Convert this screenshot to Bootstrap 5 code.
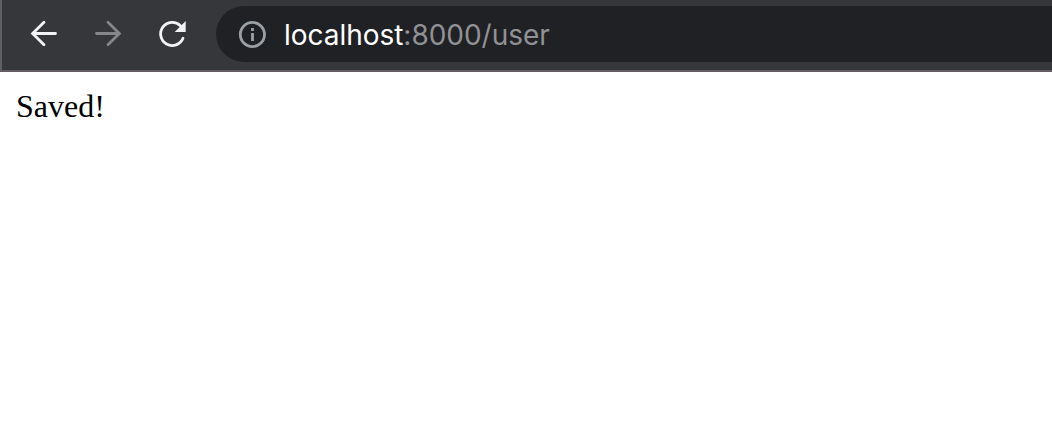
<!DOCTYPE html>
<html lang="en">
<head>
<meta charset="utf-8">
<title>localhost:8000/user</title>
<link href="https://cdn.jsdelivr.net/npm/bootstrap@5.3.0/dist/css/bootstrap.min.css" rel="stylesheet">
<style>
body { background: #fff; color: #000; }
.toolbar { height: 72px; padding-left: 24px; background: #36373b; border-left: 2px solid #5f6065; border-bottom: 2px solid #625e64; }
.tool-btn { width: 36px; height: 36px; margin: -4px 28px 0 0; color: #f1f3f4; }
.tool-btn:disabled { color: #85868a; opacity: 1; }
.tool-btn.reload { margin-right: 26px; }
.omnibox { height: 56px; padding-left: 22px; margin-top: -2px; background: #202125; border-radius: 28px 0 0 28px; color: #919194; }
.address { font: 400 28px/34px Inter, "Liberation Sans", sans-serif; margin: 1px 0 0 18px; letter-spacing: -.03px; }
.host { color: #fff; }
.page-text { padding: 16px; font: 32px/37px "Liberation Serif", serif; }
</style>
<script src="https://cdn.jsdelivr.net/npm/bootstrap@5.3.0/dist/js/bootstrap.bundle.min.js"></script>
</head>
<body class="overflow-hidden">
<nav class="toolbar d-flex align-items-center" aria-label="Browser toolbar">
  <button class="tool-btn btn p-0 border-0 d-flex flex-shrink-0" aria-label="Back">
    <svg width="36" height="36" viewBox="0 0 36 36" fill="none" stroke="currentColor" stroke-width="2.8" stroke-linecap="round"><path d="M18 7.2 6.6 18.5 18 29.8M7 18.5H29.5"/></svg>
  </button>
  <button class="tool-btn btn p-0 border-0 d-flex flex-shrink-0" aria-label="Forward" disabled>
    <svg width="36" height="36" viewBox="0 0 36 36" fill="none" stroke="currentColor" stroke-width="2.8" stroke-linecap="round"><path d="M18 7.2 29.4 18.5 18 29.8M29 18.5H6.5"/></svg>
  </button>
  <button class="tool-btn reload btn p-0 border-0 d-flex flex-shrink-0" aria-label="Reload">
    <svg width="36" height="36" viewBox="0 0 36 36" fill="none"><path d="M26.4 10.7A11.6 11.6 0 1 0 29 23.3" stroke="currentColor" stroke-width="2.8" stroke-linecap="round"/><path d="M31.7 6V17H20.7Z" fill="currentColor"/></svg>
  </button>
  <div class="omnibox d-flex align-items-center flex-grow-1">
    <svg width="28" height="28" viewBox="0 0 28 28" fill="none" stroke="#9aa0a4" stroke-width="2.8"><circle cx="14.4" cy="14.5" r="12.1"/><path d="M14.5 8V11M14.5 13V21"/></svg>
    <div class="address text-nowrap"><span class="host">localhost</span><span>:8000/user</span></div>
  </div>
</nav>
<main class="page-text">Saved!</main>
</body>
</html>
